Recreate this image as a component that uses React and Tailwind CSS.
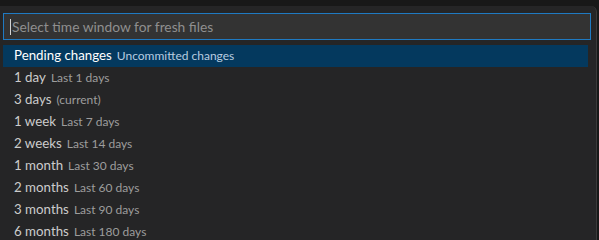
const items = [
  { label: 'Pending changes', desc: 'Uncommitted changes', selected: true },
  { label: '1 day', desc: 'Last 1 days' },
  { label: '3 days', desc: '(current)' },
  { label: '1 week', desc: 'Last 7 days' },
  { label: '2 weeks', desc: 'Last 14 days' },
  { label: '1 month', desc: 'Last 30 days' },
  { label: '2 months', desc: 'Last 60 days' },
  { label: '3 months', desc: 'Last 90 days' },
  { label: '6 months', desc: 'Last 180 days' },
];

const App = () => {
  return (
    <div
      className="w-[599px] h-[240px] overflow-hidden bg-[#181818] pt-[6px]"
      style={{ fontFamily: 'Lato, "Noto Sans", sans-serif' }}
    >
      <div className="w-[597px] h-[260px] bg-[#252526] rounded-tr-[6px] border-r border-[#3a3a3a] pt-[7px]">
        {/* Search input */}
        <div className="ml-[3px] w-[588px] h-[27px] bg-[#333333] border border-[#1f7ac2] flex items-center pl-[6px]">
          <span className="w-px h-[16px] bg-[#d4d4d4]" />
          <span className="text-[13.8px] text-[#8f8f8f] leading-none ml-px">Select time window for fresh files</span>
        </div>

        {/* Options */}
        <div className="mt-[5px]">
          {items.map((item) => (
            <div
              key={item.label}
              className={
                'ml-[3px] w-[585px] h-[22px] flex items-center pl-[11px] gap-[5px] ' +
                (item.selected ? 'bg-[#04395e]' : '')
              }
            >
              <span className={'text-[13.3px] ' + (item.selected ? 'text-white' : 'text-[#cccccc]')}>
                {item.label}
              </span>
              <span
                className={'text-[12px] ' + (item.selected ? 'text-[#b8cde0]' : 'text-[#9d9d9d]')}
              >
                {item.desc}
              </span>
            </div>
          ))}
        </div>
      </div>
    </div>
  );
};

export default App;
